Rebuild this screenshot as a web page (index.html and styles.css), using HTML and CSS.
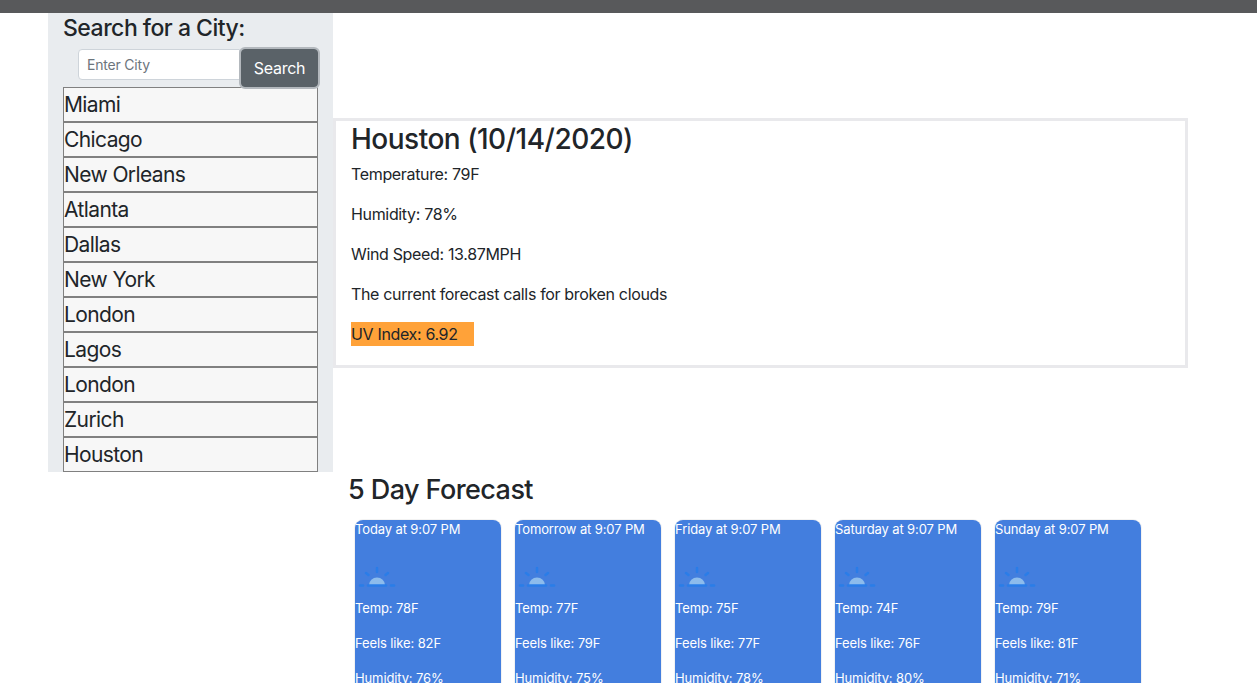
FILE: index.html
```html
<!DOCTYPE html>
<html lang="en">

<head>
  <meta charset="UTF-8">
  <meta name="viewport" content="width=device-width, initial-scale=1.0">
  <title>Weather Dashboard</title>
  <link rel="stylesheet" href="styles.css">
</head>

<body>
  <div class="top-bar"></div>
  <div class="page">
    <!-- Search column -->
    <aside class="sidebar">
      <h4 class="search-title">Search for a City:</h4>
      <form class="search-form">
        <input class="search-input" type="text" placeholder="Enter City">
        <button class="search-button" type="button">Search</button>
      </form>
      <ul class="city-list">
        <li class="city">Miami</li>
        <li class="city">Chicago</li>
        <li class="city">New Orleans</li>
        <li class="city">Atlanta</li>
        <li class="city">Dallas</li>
        <li class="city">New York</li>
        <li class="city">London</li>
        <li class="city">Lagos</li>
        <li class="city">London</li>
        <li class="city">Zurich</li>
        <li class="city">Houston</li>
      </ul>
    </aside>

    <main class="content">
      <!-- Current weather -->
      <section class="current">
        <h3 class="current-title">Houston (10/14/2020)</h3>
        <p class="current-line">Temperature: 79F</p>
        <p class="current-line">Humidity: 78%</p>
        <p class="current-line">Wind Speed: 13.87MPH</p>
        <p class="current-line">The current forecast calls for broken clouds</p>
        <p class="current-line uv">UV Index: 6.92</p>
      </section>

      <!-- Forecast cards -->
      <h3 class="forecast-title">5 Day Forecast</h3>
      <div class="forecast">
        <div class="card">
          <p class="card-date">Today at 9:07 PM</p>
          <svg class="card-icon" viewBox="0 0 50 60"><use href="#sun"></use></svg>
          <p class="card-line">Temp: 78F</p>
          <p class="card-line">Feels like: 82F</p>
          <p class="card-line">Humidity: 76%</p>
        </div>
        <div class="card">
          <p class="card-date">Tomorrow at 9:07 PM</p>
          <svg class="card-icon" viewBox="0 0 50 60"><use href="#sun"></use></svg>
          <p class="card-line">Temp: 77F</p>
          <p class="card-line">Feels like: 79F</p>
          <p class="card-line">Humidity: 75%</p>
        </div>
        <div class="card">
          <p class="card-date">Friday at 9:07 PM</p>
          <svg class="card-icon" viewBox="0 0 50 60"><use href="#sun"></use></svg>
          <p class="card-line">Temp: 75F</p>
          <p class="card-line">Feels like: 77F</p>
          <p class="card-line">Humidity: 78%</p>
        </div>
        <div class="card">
          <p class="card-date">Saturday at 9:07 PM</p>
          <svg class="card-icon" viewBox="0 0 50 60"><use href="#sun"></use></svg>
          <p class="card-line">Temp: 74F</p>
          <p class="card-line">Feels like: 76F</p>
          <p class="card-line">Humidity: 80%</p>
        </div>
        <div class="card">
          <p class="card-date">Sunday at 9:07 PM</p>
          <svg class="card-icon" viewBox="0 0 50 60"><use href="#sun"></use></svg>
          <p class="card-line">Temp: 79F</p>
          <p class="card-line">Feels like: 81F</p>
          <p class="card-line">Humidity: 71%</p>
        </div>
      </div>
    </main>
  </div>

  <svg class="icon-defs" width="0" height="0">
    <symbol id="sun" viewBox="0 0 50 60">
      <path d="M14 46a8 7.500 0 0 1 16 0z" fill="#8dbcec"></path>
      <g stroke="#2a7de8" stroke-width="2.500" fill="none" stroke-linecap="round">
        <path d="M13 46.500h18"></path>
        <path d="M22 29v4"></path>
        <path d="M11 34l2.500 2"></path>
        <path d="M33 34l-2.500 2"></path>
        <path d="M5 46.500h3"></path>
        <path d="M36 46.500h3"></path>
      </g>
    </symbol>
  </svg>
</body>

</html>
```

FILE: styles.css
```css
html,
body {
  height: 100%;
}

body {
  margin: 0;
  overflow: hidden;
  font-family: Inter, "Liberation Sans", sans-serif;
  font-size: 16px;
  line-height: 24px;
  letter-spacing: -0.34px;
  color: #212529;
  background-color: #fff;
}

.top-bar {
  height: 13px;
  background-color: #58595b;
}

.page {
  display: flex;
  align-items: flex-start;
  padding-left: 48px;
}

.sidebar {
  width: 285px;
  box-sizing: border-box;
  padding: 0 15px;
  background-color: #e9ecef;
}

.search-title {
  margin: 0;
  height: 36px;
  font-size: 23px;
  font-weight: 500;
  line-height: 30px;
  letter-spacing: -0.5px;
}

.search-form {
  display: flex;
  align-items: flex-start;
  height: 38px;
  padding-left: 15px;
}

.search-input {
  width: 162px;
  height: 31px;
  box-sizing: border-box;
  padding: 0 8px;
  border: 1px solid #ced4da;
  border-radius: 4px 0 0 4px;
  font-family: inherit;
  font-size: 14px;
  letter-spacing: -0.2px;
  color: #495057;
  background-color: #fff;
}

.search-input::placeholder {
  color: #6c757d;
}

.search-button {
  width: 77px;
  height: 38px;
  margin-left: 1px;
  padding: 0;
  border: 1px solid #5a6268;
  border-radius: 4px;
  box-shadow: 0 0 0 2px #b3b8bd;
  font-family: inherit;
  font-size: 16px;
  letter-spacing: -0.25px;
  color: #fff;
  background-color: #5a6268;
}

.city-list {
  margin: 0;
  padding: 0;
  list-style: none;
}

.city {
  height: 35px;
  box-sizing: border-box;
  border: 1px solid #808080;
  font-size: 21px;
  line-height: 33px;
  letter-spacing: -0.6px;
  background-color: #f7f7f7;
}

.content {
  flex: 0 0 855px;
}

.current {
  height: 250px;
  box-sizing: border-box;
  margin-top: 105px;
  padding: 3px 15px;
  border: 3px solid #e9e9ec;
}

.current-title {
  margin: 0 0 8px;
  font-size: 28px;
  font-weight: 500;
  line-height: 30px;
  letter-spacing: -0.5px;
}

.current-line {
  margin: 0 0 16px;
}

.uv {
  width: 123px;
  background-color: #ffa239;
}

.forecast-title {
  margin: 105px 0 13px 15px;
  font-size: 27px;
  font-weight: 500;
  line-height: 34px;
  letter-spacing: -0.57px;
}

.forecast {
  display: flex;
  gap: 14px;
  padding-left: 22px;
}

.card {
  flex: 0 0 146px;
  box-sizing: border-box;
  height: 200px;
  border-radius: 8px;
  box-shadow: 0 0 0 1px #f2f2f2;
  font-size: 13px;
  line-height: 19px;
  letter-spacing: -0.12px;
  color: #fff;
  background-color: #437ede;
}

.card-date {
  margin: 0;
}

.card-icon {
  display: block;
  width: 50px;
  height: 60px;
}

.card-line {
  margin: 0 0 16px;
}

.icon-defs {
  position: absolute;
}
```
